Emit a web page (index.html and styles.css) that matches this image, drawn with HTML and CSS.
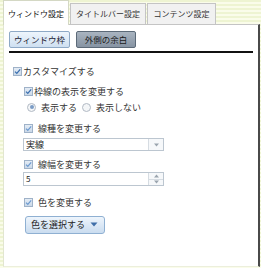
FILE: index.html
```html
<!DOCTYPE html>
<html lang="ja">
<head>
    <meta charset="UTF-8">
    <meta name="viewport" content="width=device-width, initial-scale=1.0">
    <title>ウィンドウ設定</title>
    <link rel="stylesheet" href="styles.css">
</head>
<body>
    <div class="tabs">
        <div class="tab active">ウィンドウ設定</div>
        <div class="tab tab-title">タイトルバー設定</div>
        <div class="tab tab-content">コンテンツ設定</div>
    </div>
    <div class="panel">
        <div class="subtabs">
            <span class="subtab">ウィンドウ枠</span>
            <span class="subtab selected">外側の余白</span>
        </div>
        <div class="rule"></div>

        <label class="row top">
            <span class="cb"><svg viewBox="0 0 9 9" width="9" height="9"><path d="M2 4.6 L3.8 6.4 L7.2 2.4" fill="none" stroke="#3a6fb0" stroke-width="1.3"/></svg></span>カスタマイズする
        </label>

        <div class="group">
            <label class="row r-border">
                <span class="cb"><svg viewBox="0 0 9 9" width="9" height="9"><path d="M2 4.6 L3.8 6.4 L7.2 2.4" fill="none" stroke="#3a6fb0" stroke-width="1.3"/></svg></span>枠線の表示を変更する
            </label>
            <div class="row radios">
                <span class="radio on"></span><span class="rtext">表示する</span>
                <span class="radio"></span><span class="rtext">表示しない</span>
            </div>

            <label class="row r-type">
                <span class="cb"><svg viewBox="0 0 9 9" width="9" height="9"><path d="M2 4.6 L3.8 6.4 L7.2 2.4" fill="none" stroke="#6d9ad0" stroke-width="1.2"/></svg></span><span class="gap">線種を変更する</span>
            </label>
            <div class="field">
                <span class="value">実線</span>
                <span class="arrow"><svg viewBox="0 0 7 4" width="7" height="4"><path d="M1 0.5 L6 0.5 L3.5 3.5 Z" fill="#9aa4ae"/></svg></span>
            </div>

            <label class="row r-width">
                <span class="cb"><svg viewBox="0 0 9 9" width="9" height="9"><path d="M2 4.6 L3.8 6.4 L7.2 2.4" fill="none" stroke="#6d9ad0" stroke-width="1.2"/></svg></span><span class="gap">線幅を変更する</span>
            </label>
            <div class="field spin">
                <span class="value">5</span>
                <span class="arrows">
                    <span class="half"><svg viewBox="0 0 7 4" width="7" height="4"><path d="M1 3.5 L6 3.5 L3.5 0.5 Z" fill="#9aa4ae"/></svg></span>
                    <span class="half"><svg viewBox="0 0 7 4" width="7" height="4"><path d="M1 0.5 L6 0.5 L3.5 3.5 Z" fill="#9aa4ae"/></svg></span>
                </span>
            </div>

            <label class="row r-color">
                <span class="cb"><svg viewBox="0 0 9 9" width="9" height="9"><path d="M2 4.6 L3.8 6.4 L7.2 2.4" fill="none" stroke="#6d9ad0" stroke-width="1.2"/></svg></span><span class="gap">色を変更する</span>
            </label>
            <div class="colorbtn">色を選択する <svg viewBox="0 0 8 5" width="8" height="5"><path d="M0.5 0.5 L7.5 0.5 L4 4.5 Z" fill="#3f6ea8"/></svg></div>
        </div>
    </div>
</body>
</html>
```

FILE: styles.css
```css
body {
    margin: 0;
    width: 261px;
    height: 268px;
    overflow: hidden;
    font-family: "Noto Sans CJK JP", "Liberation Sans", sans-serif;
    color: #222;
    background: repeating-linear-gradient(to bottom, #eef4d2 0, #eef4d2 2px, #fafcea 2px, #fafcea 4px);
}

.tabs {
    display: flex;
    align-items: flex-end;
    height: 24px;
    padding-left: 3px;
}

.tab {
    box-sizing: border-box;
    height: 21px;
    line-height: 20px;
    font-size: 8px;
    text-align: center;
    white-space: nowrap;
    color: #333;
    background: #f1f1f1;
    border: 1px solid #c4c4c4;
    border-bottom: none;
    margin-right: 1px;
}

.tab.active {
    width: 66px;
    height: 25px;
    line-height: 26px;
    background: #fff;
    color: #111;
    border-color: #d4d8c4;
    position: relative;
    z-index: 1;
    margin-bottom: -1px;
}

.tab-title {
    width: 76px;
}

.tab-content {
    width: 69px;
}

.panel {
    box-sizing: border-box;
    margin-left: 3px;
    width: 257px;
    height: 243px;
    background: #fff;
    border-top: 1px solid #c4c4c4;
    border-left: 1px solid #e2e6d0;
    border-right: 2px solid #4a4a4a;
    border-bottom: 1px solid #ecefdc;
    padding: 6px 5px 0 5px;
}

.subtabs {
    display: flex;
    gap: 6px;
    height: 17px;
}

.subtab {
    box-sizing: border-box;
    height: 17px;
    line-height: 15px;
    font-size: 8.5px;
    width: 61px;
    text-align: center;
    white-space: nowrap;
    border: 1px solid #8ea9c6;
    border-radius: 2px;
    background: linear-gradient(to bottom, #eef5fc, #cfe0f1);
    color: #223;
}

.subtab.selected {
    width: 60px;
    border-color: #5c6a78;
    background: linear-gradient(to bottom, #a9b4c0, #8794a3);
    color: #1a1a1a;
}

.rule {
    height: 2px;
    background: #111;
    margin-top: 3px;
    width: 244px;
}

.row {
    display: flex;
    align-items: center;
    height: 14px;
    font-size: 9px;
    white-space: nowrap;
    color: #333;
}

.row.top {
    margin-top: 11px;
    padding-left: 4px;
}

.cb {
    box-sizing: border-box;
    display: inline-flex;
    width: 9px;
    height: 9px;
    border: 1px solid #9fb2c8;
    background: linear-gradient(to bottom, #e4ecf5, #cbd9e8);
    margin-right: 1px;
}

.cb svg {
    margin: -1px;
}

.group {
    padding-left: 15px;
}

.r-border {
    margin-top: 6px;
}

.radios {
    margin-top: 2px;
    padding-left: 3px;
}

.radio {
    box-sizing: border-box;
    width: 9px;
    height: 9px;
    border-radius: 50%;
    border: 1px solid #b2bac4;
    background: #f4f6f8;
    margin-right: 5px;
    position: relative;
}

.radio.on::after {
    content: "";
    position: absolute;
    left: 1.5px;
    top: 1.5px;
    width: 4px;
    height: 4px;
    border-radius: 50%;
    background: #7b9cc6;
}

.rtext {
    margin-right: 5px;
}

.gap {
    margin-left: 4px;
}

.r-type {
    margin-top: 7px;
}

.field {
    box-sizing: border-box;
    display: flex;
    width: 141px;
    height: 13px;
    margin-top: 3px;
    margin-left: -1px;
    border: 1px solid #bcc6d0;
    background: #fff;
    font-size: 9px;
}

.value {
    flex: 1;
    line-height: 11px;
    padding-left: 2px;
}

.arrow {
    width: 14px;
    border-left: 1px solid #d6dce2;
    background: #f6f8fa;
    display: flex;
    align-items: center;
    justify-content: center;
}

.r-width {
    margin-top: 6px;
}

.spin {
    height: 14px;
    margin-top: 1px;
    font-size: 8px;
}

.spin .value {
    line-height: 12px;
}

.arrows {
    width: 14px;
    border-left: 1px solid #d6dce2;
    display: flex;
    flex-direction: column;
}

.half {
    flex: 1;
    display: flex;
    align-items: center;
    justify-content: center;
    background: #f6f8fa;
}

.half + .half {
    border-top: 1px solid #d6dce2;
}

.r-color {
    margin-top: 9px;
}

.colorbtn {
    box-sizing: border-box;
    display: inline-flex;
    align-items: center;
    gap: 5px;
    height: 18px;
    margin-top: 2px;
    margin-left: 1px;
    padding: 0 6px 0 5px;
    font-size: 9px;
    color: #222;
    border: 1px solid #8fb0d2;
    border-radius: 3px;
    background: linear-gradient(to bottom, #eef5fc, #cadcef);
}
```
